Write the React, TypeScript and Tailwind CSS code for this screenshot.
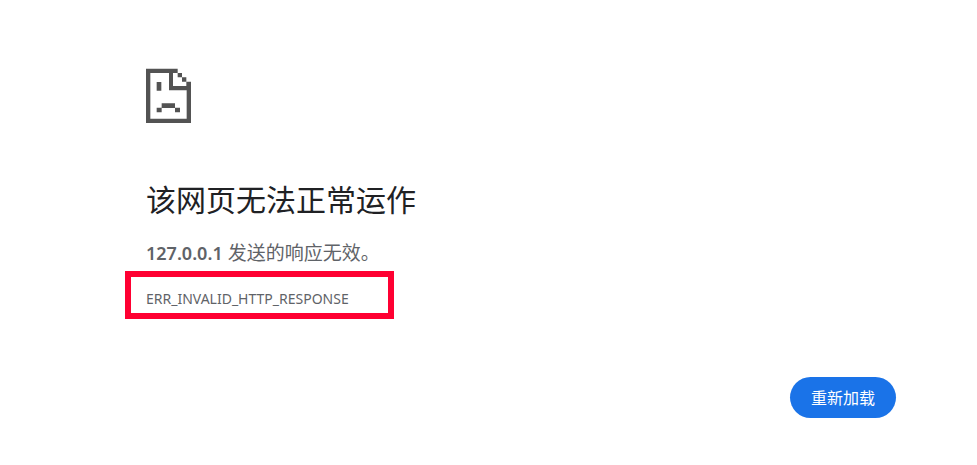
function SadPage() {
  return (
    <svg
      viewBox="0 0 135 165"
      className="block h-[55px] w-[45px]"
      fill="#535353"
      shapeRendering="geometricPrecision"
      role="img"
      aria-label="页面错误"
    >
      <path
        fillRule="evenodd"
        d="M0 2H95V15H108V28H121V41H135V165H0ZM13 15V152H122V67H69V15ZM81 15V54H121V41H108V28H95V15Z"
      />
      <path d="M32 42H46V68H32ZM47 106H87V120H47ZM32 119H47V133H32ZM87 119H102V133H87Z" />
    </svg>
  );
}

export default function App() {
  return (
    <main
      lang="zh-CN"
      className="min-h-screen bg-white pt-[68px] pr-[81px] pb-12 pl-[146px] font-['Noto_Sans','Noto_Sans_CJK_SC',sans-serif] text-[#5f6368]"
    >
      <SadPage />
      <h1 className="mt-[58px] text-[30px] leading-[38px] text-[#202124]">该网页无法正常运作</h1>
      <p className="mt-5 text-[19px] leading-7">
        <strong className="text-lg leading-7 font-semibold">127.0.0.1</strong> 发送的响应无效。
      </p>
      <div className="mt-1 -ml-[21px] flex h-12 w-[269px] items-center border-6 border-[#ff0032] pt-2 pl-[15px] text-sm">
        ERR_INVALID_HTTP_RESPONSE
      </div>
      <div className="mt-[58px] flex justify-end">
        <button type="button" className="h-[41px] rounded-full bg-[#1a73e8] px-[21px] text-base text-white">
          重新加载
        </button>
      </div>
    </main>
  );
}
